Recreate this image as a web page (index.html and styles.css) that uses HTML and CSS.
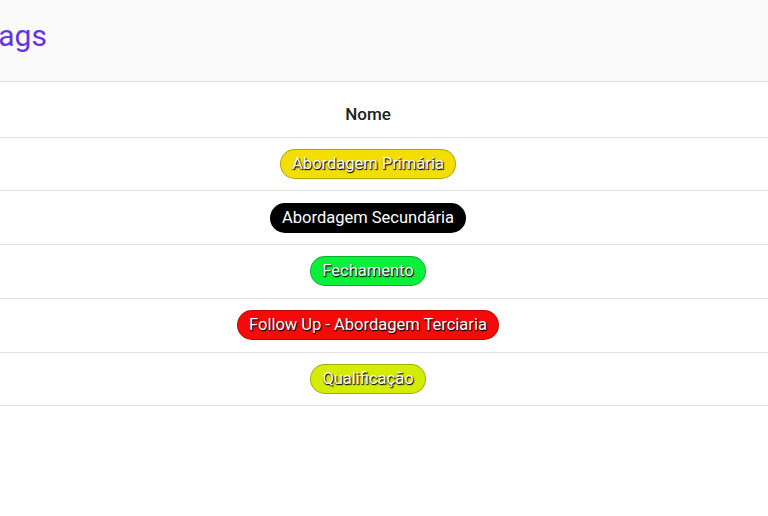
FILE: index.html
```html
<!DOCTYPE html>
<html lang="pt">
<head>
<meta charset="utf-8">
<link rel="stylesheet" href="styles.css">
</head>
<body>
<header class="topbar">
  <h1 class="title">Tags</h1>
</header>
<table class="tags-table">
  <thead>
    <tr><th>Nome</th></tr>
  </thead>
  <tbody>
    <tr><td><span class="tag tag-yellow">Abordagem Primária</span></td></tr>
    <tr><td><span class="tag tag-black">Abordagem Secundária</span></td></tr>
    <tr><td><span class="tag tag-green">Fechamento</span></td></tr>
    <tr><td><span class="tag tag-red">Follow Up - Abordagem Terciaria</span></td></tr>
    <tr><td><span class="tag tag-lime">Qualificação</span></td></tr>
  </tbody>
</table>
</body>
</html>
```
FILE: styles.css
```css
html, body {
  margin: 0;
  padding: 0;
  background: #ffffff;
  font-family: Roboto, "Noto Sans", sans-serif;
  color: #212121;
}
.topbar {
  height: 82px;
  background: #fafafa;
  border-bottom: 1px solid #e0e0e0;
  display: flex;
  align-items: center;
  padding-bottom: 10px;
  box-sizing: border-box;
}
.title {
  margin: 0 0 0 -18px;
  font-size: 30px;
  font-weight: 400;
  color: #6632e6;
  line-height: 1;
}
.tags-table {
  width: 100%;
  border-collapse: collapse;
}
.tags-table th {
  height: 55px;
  box-sizing: border-box;
  font-size: 17px;
  font-weight: 500;
  color: #212121;
  text-align: center;
  vertical-align: top;
  padding: 22px 32px 0 0;
  border-bottom: 1px solid #e0e0e0;
}
.tags-table td {
  height: 52.8px;
  text-align: center;
  padding: 0 32px 0 0;
  border-bottom: 1px solid #e0e0e0;
}
.tag {
  display: inline-block;
  padding: 4px 11px;
  border-radius: 16px;
  font-size: 16.5px;
  line-height: 20px;
  color: #ffffff;
  text-shadow: 1px 1px 1px #000, 0 1px 1px rgba(0, 0, 0, 0.6);
  border: 1px solid rgba(0, 0, 0, 0.25);
}
.tag-yellow { background: #f2de00; }
.tag-black { background: #000000; }
.tag-green { background: #0af03a; }
.tag-red { background: #f50a0a; }
.tag-lime { background: #d4ec00; }
```
